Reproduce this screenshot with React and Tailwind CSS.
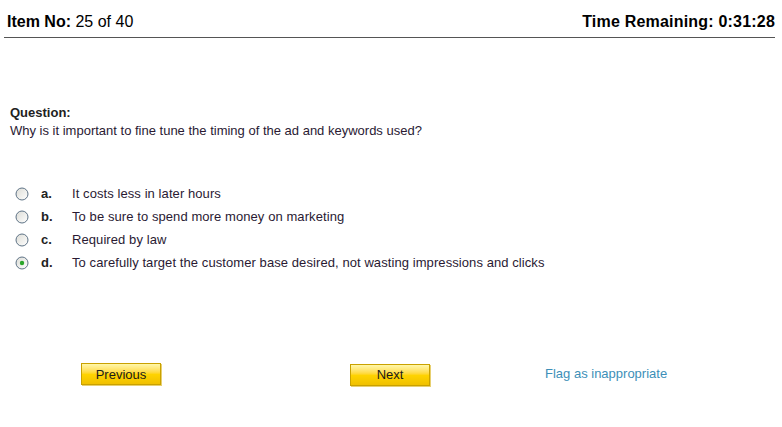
import React from "react";

function Radio({ checked }) {
  return (
    <svg width="14" height="14" viewBox="0 0 14 14" className="block">
      <defs>
        <linearGradient id={checked ? "rg1" : "rg0"} x1="0" y1="0" x2="1" y2="1">
          <stop offset="0" stopColor="#dcdcd6" />
          <stop offset="1" stopColor="#ffffff" />
        </linearGradient>
      </defs>
      <circle cx="7" cy="7" r="6" fill={`url(#${checked ? "rg1" : "rg0"})`} stroke="#5e7386" strokeWidth="1" />
      {checked && <circle cx="7" cy="7" r="2.2" fill="#2aa52a" />}
    </svg>
  );
}

function YButton({ children }) {
  return (
    <button className="w-[80px] h-[22px] border border-[#c9a100] bg-gradient-to-b from-[#fff7a8] via-[#ffd400] to-[#f0c000] text-[13px] text-[#1a1a1a] leading-none shadow-[1px_1px_0_#e8d070]">
      {children}
    </button>
  );
}

const options = [
  ["a.", "It costs less in later hours", false],
  ["b.", "To be sure to spend more money on marketing", false],
  ["c.", "Required by law", false],
  ["d.", "To carefully target the customer base desired, not wasting impressions and clicks", true],
];

export default function App() {
  return (
    <div className="w-[782px] h-[427px] bg-white font-['Liberation_Sans',Arial,sans-serif] text-[#222]">
      <div className="pt-[13px] px-[5px]">
        <div className="flex justify-between items-end px-[2px] text-[16px] leading-[18px] text-black pb-[6px]">
          <div>
            <span className="font-bold">Item No:</span> 25 of 40
          </div>
          <div className="font-bold tracking-[0.2px]">Time Remaining: 0:31:28</div>
        </div>
        <div className="h-px bg-[#555] mr-[2px] ml-[-1px]" />
      </div>

      <div className="pl-[10px] mt-[66px] text-[13px] leading-[18px]">
        <div className="font-bold text-[#222]">Question:</div>
        <div className="text-[#2a1a33]">Why is it important to fine tune the timing of the ad and keywords used?</div>
      </div>

      <div className="mt-[47px] pl-[15px] flex flex-col gap-[9px] text-[13px] leading-[14px]">
        {options.map(([l, t, c]) => (
          <div key={l} className="flex items-center">
            <Radio checked={c} />
            <span className="font-bold w-[31px] ml-[12px] text-[#222]">{l}</span>
            <span className="text-[#2a1a33] tracking-[0.08px]">{t}</span>
          </div>
        ))}
      </div>

      <div className="mt-[92px] flex items-center pl-[81px]">
        <YButton>Previous</YButton>
        <div className="ml-[189px]">
          <YButton>Next</YButton>
        </div>
        <a className="ml-[115px] text-[13px] text-[#3d8fb8]">Flag as inappropriate</a>
      </div>
    </div>
  );
}
